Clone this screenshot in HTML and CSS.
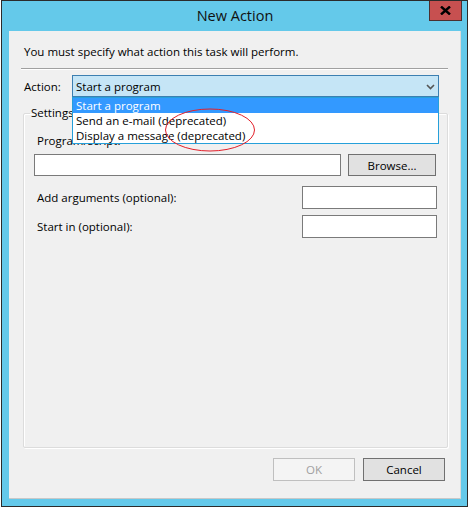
FILE: index.html
```html
<!DOCTYPE html>
<html>
<head>
<meta charset="utf-8">
<link rel="stylesheet" href="styles.css">
</head>
<body>
<div class="window">
  <div class="titlebar">
    <span></span>
    <span class="title">New Action</span>
    <button class="close"><svg width="11" height="9" viewBox="0 0 11 9"><path d="M1 0.5 L10 8.5 M10 0.5 L1 8.5" stroke="#000" stroke-width="2.4"/></svg></button>
  </div>
  <div class="frame">
    <div class="content">
      <p class="intro">You must specify what action this task will perform.</p>
      <div class="sep"></div>
      <div class="action-row">
        <span class="label">Action:</span>
        <div class="combo">
          <span>Start a program</span>
          <svg class="chev" width="9" height="6" viewBox="0 0 9 6"><path d="M1 1 L4.5 4.5 L8 1" stroke="#555" stroke-width="1.6" fill="none"/></svg>
          <ul class="dropdown">
            <li class="sel">Start a program</li>
            <li>Send an e-mail (deprecated)</li>
            <li>Display a message (deprecated)</li>
          </ul>
        </div>
      </div>
      <fieldset class="group">
        <legend>Settings</legend>
        <div class="label prog">Program/script:</div>
        <div class="prog-row">
          <div class="input wide"></div>
          <button class="btn">Browse...</button>
        </div>
        <div class="opt-row">
          <span class="label">Add arguments (optional):</span>
          <div class="input short"></div>
        </div>
        <div class="opt-row">
          <span class="label">Start in (optional):</span>
          <div class="input short"></div>
        </div>
      </fieldset>
      <div class="buttons">
        <button class="btn disabled">OK</button>
        <button class="btn">Cancel</button>
      </div>
      <svg class="ellipse" width="94" height="46" viewBox="0 0 94 46"><ellipse cx="47" cy="23" rx="44.5" ry="21" fill="none" stroke="#e3202a" stroke-width="1"/></svg>
    </div>
  </div>
</div>
</body>
</html>
```

FILE: styles.css
```css
* { box-sizing: border-box; }
html, body { margin: 0; padding: 0; }
body {
  background: #ffffff;
  width: 469px;
  height: 508px;
  font-family: "Open Sans", "Noto Sans", sans-serif;
  font-size: 11.5px;
  color: #000;
  overflow: hidden;
}
.window {
  margin-left: 1px;
  width: 467px;
  height: 507px;
  border: 1px solid #2b2b2b;
  background: #64c9ea;
  display: flex;
  flex-direction: column;
}
.titlebar {
  height: 30px;
  display: grid;
  grid-template-columns: 1fr auto 1fr;
  align-items: start;
}
.title {
  font-size: 14.5px;
  line-height: 30px;
  color: #111;
  padding-left: 1px;
}
.close {
  justify-self: end;
  margin-right: 5px;
  width: 33px;
  height: 20px;
  background: #c75050;
  border: 1px solid #4b3030;
  border-top: none;
  padding: 0;
  display: flex;
  align-items: center;
  justify-content: center;
}
.frame {
  flex: 1;
  padding: 0 6px 6px 7px;
}
.content {
  position: relative;
  height: 468px;
  background: #f0f0f0;
  border-right: 1px solid #dadada;
  border-bottom: 1px solid #c8c8c8;
  padding: 0 0 0 12px;
}
.intro {
  margin: 0;
  padding: 13px 0 0 3px;
  line-height: 16px;
  height: 37px;
}
.sep {
  width: 427px;
  height: 2px;
  border-top: 1px solid #a0a0a0;
  border-bottom: 1px solid #ffffff;
}
.action-row {
  margin-top: 5px;
  display: flex;
  align-items: center;
  height: 22px;
}
.action-row .label {
  width: 51px;
  padding-left: 3px;
}
.combo {
  position: relative;
  width: 367px;
  height: 22px;
  border: 1px solid #3c7fb1;
  background: #c5e5f6;
  display: flex;
  align-items: center;
  padding-left: 3px;
}
.chev {
  position: absolute;
  right: 3px;
  top: 8px;
}
.dropdown {
  position: absolute;
  left: -1px;
  top: 21px;
  width: 367px;
  margin: 0;
  padding: 0;
  list-style: none;
  background: #fff;
  border: 1px solid #26a0da;
  z-index: 5;
}
.dropdown li {
  height: 15px;
  line-height: 15px;
  padding-left: 3px;
}
.dropdown li.sel {
  background: #3399ff;
  color: #fff;
}
.group {
  margin: 9px 0 0 2px;
  width: 425px;
  height: 342px;
  border: 1px solid #dcdcdc;
  box-shadow: inset 1px 1px 0 #fff, 1px 1px 0 #fff;
  border-radius: 2px;
  padding: 0 0 0 10px;
}
.group legend {
  padding: 0 1px;
  margin-left: -4px;
  line-height: 14px;
}
.prog {
  margin-top: 13px;
  padding-left: 3px;
  line-height: 16px;
}
.prog-row {
  margin-top: 5px;
  display: flex;
  gap: 7px;
}
.input {
  height: 22px;
  background: #fff;
  border: 1px solid #7a7a7a;
}
.wide { width: 307px; }
.short { width: 135px; height: 23px; }
.btn {
  font-family: inherit;
  font-size: inherit;
  width: 88px;
  height: 22px;
  background: #e1e1e1;
  border: 1px solid #707070;
  padding: 0;
  color: #000;
}
.opt-row {
  margin-top: 10px;
  display: flex;
  align-items: center;
  justify-content: space-between;
  width: 403px;
}
.opt-row + .opt-row { margin-top: 6px; }
.opt-row .label { padding-left: 3px; }
.buttons {
  margin-top: 10px;
  display: flex;
  justify-content: flex-end;
  gap: 8px;
  width: 424px;
}
.buttons .btn { width: 82px; height: 23px; }
.btn.disabled {
  background: #f4f4f4;
  border-color: #bfbfbf;
  color: #a0a0a0;
}
.ellipse {
  position: absolute;
  left: 154px;
  top: 76px;
  z-index: 6;
}
```
